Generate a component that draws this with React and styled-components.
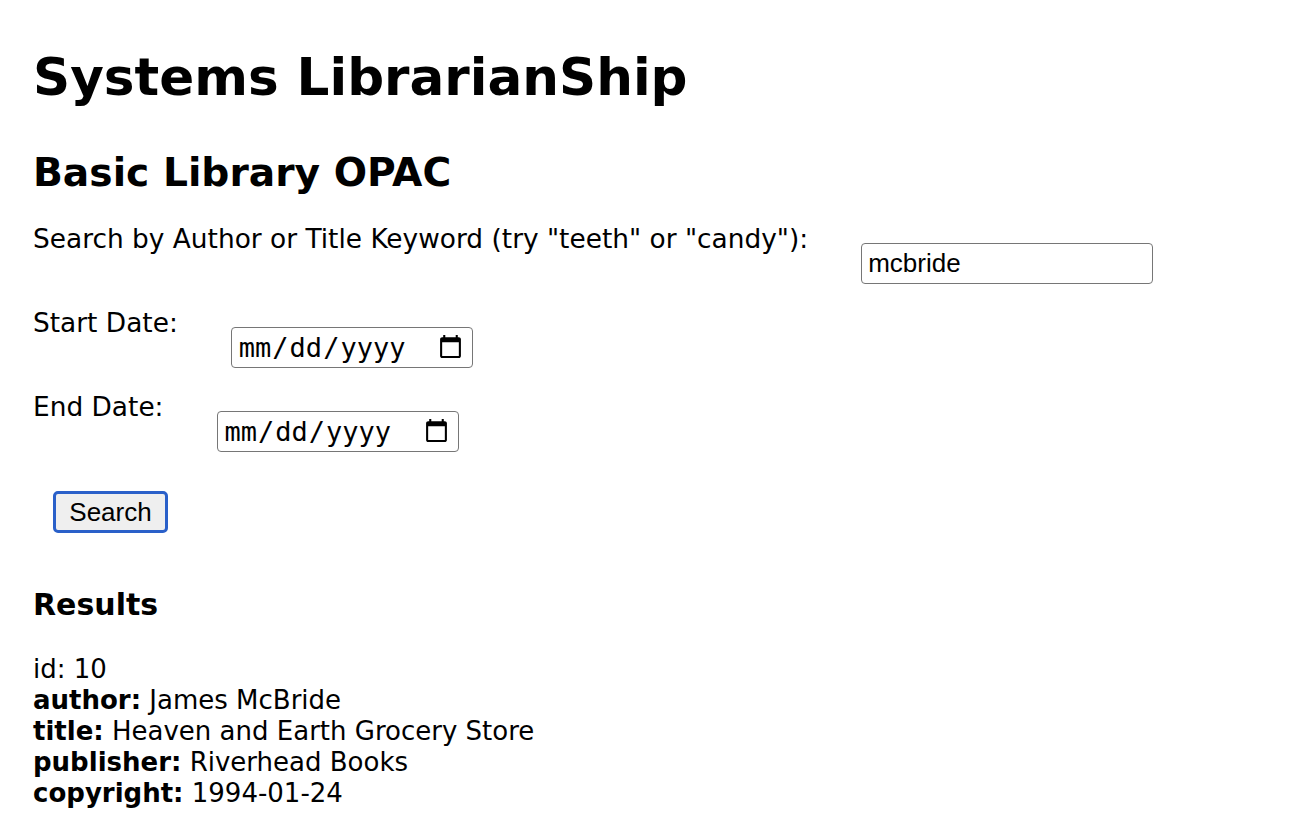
import styled, { createGlobalStyle } from "styled-components";

const GlobalStyle = createGlobalStyle`
  body {
    margin: 0;
    background: #fff;
    color: #000;
    font-family: "DejaVu Sans", Verdana, sans-serif;
    font-size: 26px;
  }
`;

const Page = styled.div`
  padding: 47px 33px 20px;
`;

const Title = styled.h1`
  font-size: 51.6px;
  line-height: 60px;
  font-weight: bold;
  margin: 0 0 43px;
`;

const SubTitle = styled.h2`
  font-size: 39.2px;
  line-height: 45px;
  margin: 0 0 28px;
`;

const Field = styled.div`
  display: flex;
  align-items: flex-start;
  margin-bottom: 23px;
`;

const Label = styled.label`
  font-size: 26.4px;
  line-height: 31px;
  margin-right: 53px;
`;

const TextInput = styled.input`
  margin-top: 20px;
  width: 292px;
  height: 41px;
  box-sizing: border-box;
  border: 1px solid #767676;
  border-radius: 4px;
  padding: 2px 6px;
  font-family: "Liberation Sans", Arial, sans-serif;
  font-size: 26px;
  color: #000;
`;

const DateInput = styled.input`
  margin-top: 20px;
  width: 242px;
  height: 41px;
  box-sizing: border-box;
  border: 1px solid #767676;
  border-radius: 4px;
  padding: 2px 6px;
  font-family: "DejaVu Sans Mono", Menlo, monospace;
  font-size: 27px;
  color: #000;
`;

const SearchButton = styled.button`
  display: block;
  margin: 39px 0 0 20px;
  width: 115px;
  height: 42px;
  box-sizing: border-box;
  background: #efefef;
  border: 3px solid #2a60c9;
  border-radius: 5px;
  font-family: "Liberation Sans", Arial, sans-serif;
  font-size: 26px;
  color: #000;
`;

const ResultsHeading = styled.h3`
  font-size: 30px;
  line-height: 35px;
  margin: 54px 0 32px;
`;

const ResultLine = styled.div`
  line-height: 31px;
`;

const Key = styled.b`
  font-weight: bold;
`;

function App() {
  return (
    <Page>
      <GlobalStyle />
      <Title>Systems LibrarianShip</Title>
      <SubTitle>Basic Library OPAC</SubTitle>
      <Field>
        <Label>Search by Author or Title Keyword (try "teeth" or "candy"):</Label>
        <TextInput defaultValue="mcbride" />
      </Field>
      <Field>
        <Label>Start Date:</Label>
        <DateInput type="date" />
      </Field>
      <Field>
        <Label>End Date:</Label>
        <DateInput type="date" />
      </Field>
      <SearchButton>Search</SearchButton>
      <ResultsHeading>Results</ResultsHeading>
      <ResultLine>id: 10</ResultLine>
      <ResultLine><Key>author:</Key> James McBride</ResultLine>
      <ResultLine><Key>title:</Key> Heaven and Earth Grocery Store</ResultLine>
      <ResultLine><Key>publisher:</Key> Riverhead Books</ResultLine>
      <ResultLine><Key>copyright:</Key> 1994-01-24</ResultLine>
    </Page>
  );
}

export default App;
